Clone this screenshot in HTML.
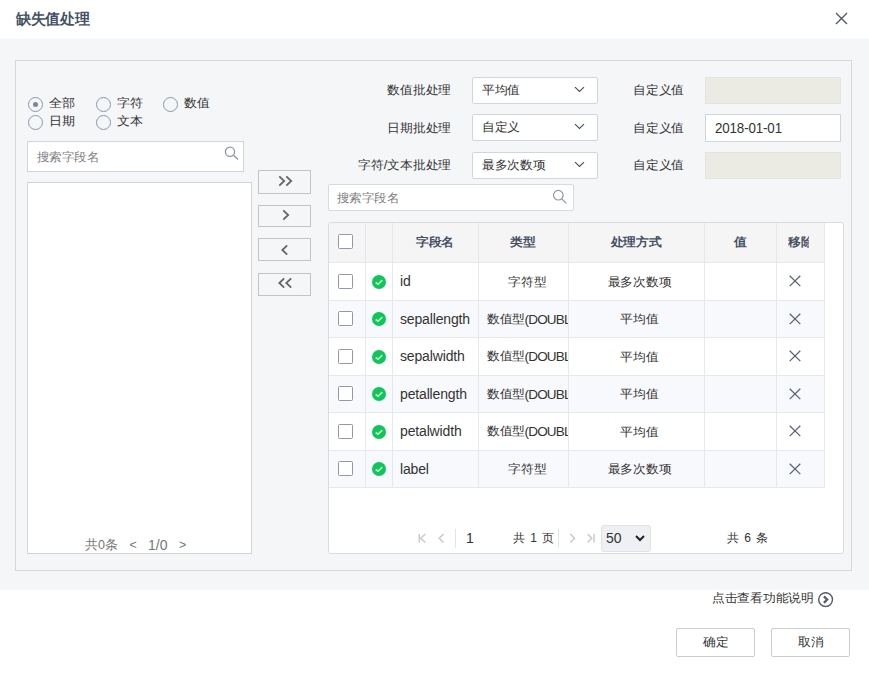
<!DOCTYPE html>
<html><head><meta charset="utf-8">
<style>
*{box-sizing:border-box;margin:0;padding:0}
html,body{width:869px;height:688px;overflow:hidden;background:#fff;font-family:"Liberation Sans",sans-serif;color:#333}
.a{position:absolute}
.title{left:16.3px;top:8px;font-size:15px;letter-spacing:-0.4px;font-weight:bold;color:#465164;line-height:22px}
.band{left:0;top:39px;width:869px;height:550px;background:#f5f6f8;box-shadow:0 -1px 0 #fafbfb,0 1px 0 #f8f9fa}
.panel{left:15px;top:60px;width:837px;height:511px;border:1px solid #d6d7d9}
.radio{width:15px;height:15px;border:1.5px solid #8e96a9;border-radius:50%}
.radio.on::after{content:"";position:absolute;left:3.5px;top:3.5px;width:5.6px;height:5.6px;border-radius:50%;background:#7d869b}
.t13{font-size:13px;line-height:16px;color:#333;white-space:nowrap;transform:scaleY(0.92);transform-origin:0 50%}
.inp{background:#fff;border:1px solid #cfd5df}
.ph{color:#808080;font-size:13px;line-height:16px;white-space:nowrap;transform:scale(0.96,0.92);transform-origin:0 50%}
.btn{width:53px;height:23px;border:1px solid #c4c4c4;background:#f5f6f8}
.lbl{font-size:13px;color:#333;text-align:right;line-height:16px;white-space:nowrap;transform:scale(0.98,0.92);transform-origin:100% 50%}
.sel{width:126px;height:27px;background:#fff;border:1px solid #cfd5df;border-radius:2px}
.dis{width:136px;height:27px;background:#ebebe4;border:1px solid #e2e4e2}
.tbl{left:328px;top:222px;width:516px;height:332px;background:#fff;border:1px solid #d8dbe0;border-radius:3px;overflow:hidden}
.cb{width:15px;height:15px;border:1.2px solid #9098aa;border-radius:1.5px;background:#fff}
.fbtn{width:79px;height:29px;border:1px solid #c8ccd6;background:#fff;border-radius:2px;font-size:13px;text-align:center;line-height:27px;color:#333}
.fbtn span{display:inline-block;transform:translateY(-0.5px) scale(0.98,0.92)}
.hl{height:1px;background:#e6e8ec}
.vl{width:1px;background:#e6e8ec}
.hd{font-size:13px;transform:scale(0.98,0.92);font-weight:bold;color:#465063;line-height:16px;white-space:nowrap}
.cell{font-size:13px;color:#333;line-height:16px;white-space:nowrap;transform:scale(0.98,0.92)}
.cj{display:inline-block;font-size:13px;transform:translateY(-1px) scale(0.98,0.92);transform-origin:0 50%}
.en{font-size:14px;color:#333;line-height:16px;white-space:nowrap;letter-spacing:-0.15px}
</style></head><body>
<div class="a title">缺失值处理</div>
<svg class="a" style="left:835px;top:12px" width="13" height="13" viewBox="0 0 13 13"><path d="M1 1L12 12M12 1L1 12" stroke="#525868" stroke-width="1.4"/></svg>
<div class="a band"></div>
<div class="a panel"></div>
<div class="a radio on" style="left:28px;top:97px"></div><div class="a t13" style="left:49px;top:95px">全部</div>
<div class="a radio" style="left:96px;top:97px"></div><div class="a t13" style="left:117px;top:95px">字符</div>
<div class="a radio" style="left:163px;top:97px"></div><div class="a t13" style="left:184px;top:95px">数值</div>
<div class="a radio" style="left:28px;top:115px"></div><div class="a t13" style="left:49px;top:113px">日期</div>
<div class="a radio" style="left:96px;top:115px"></div><div class="a t13" style="left:117px;top:113px">文本</div>
<div class="a inp" style="left:27px;top:141px;width:217px;height:31px"></div>
<div class="a ph" style="left:37px;top:149px">搜索字段名</div>
<svg class="a" style="left:222px;top:144px" width="18" height="18" viewBox="0 0 18 18"><circle cx="8" cy="7.7" r="4.6" fill="none" stroke="#8f97aa" stroke-width="1.3"/><path d="M11.4 11.2L16 15.6" stroke="#8f97aa" stroke-width="1.4"/></svg>
<div class="a" style="left:27px;top:182px;width:225px;height:372px;background:#fff;border:1px solid #d3d4d6"></div>
<div class="a" style="left:85px;top:537px;font-size:12.5px;color:#777;line-height:16px;white-space:nowrap">共0条</div>
<div class="a" style="left:129.5px;top:537px;font-size:12.5px;color:#777;line-height:16px;white-space:nowrap">&lt;</div>
<div class="a" style="left:148px;top:537px;font-size:12.5px;color:#777;line-height:16px;white-space:nowrap"><span style="font-size:14px">1/0</span></div>
<div class="a" style="left:179px;top:537px;font-size:12.5px;color:#777;line-height:16px;white-space:nowrap">&gt;</div>
<div class="a btn" style="left:258px;top:170px;height:24px"></div>
<svg class="a" style="left:277px;top:174.8px" width="17" height="12" viewBox="0 0 17 12"><path d="M2.3 1.3L7.2 6L2.3 10.7M9.3 1.3L14.2 6L9.3 10.7" fill="none" stroke="#666" stroke-width="1.8"/></svg>
<div class="a btn" style="left:258px;top:205px;height:22px"></div>
<svg class="a" style="left:277px;top:209.4px" width="17" height="12" viewBox="0 0 17 12"><path d="M6.3 1.3L11.2 6L6.3 10.7" fill="none" stroke="#666" stroke-width="1.8"/></svg>
<div class="a btn" style="left:258px;top:238px;height:23px"></div>
<svg class="a" style="left:277px;top:243.9px" width="17" height="12" viewBox="0 0 17 12"><path d="M10.2 1.3L5.3 6L10.2 10.7" fill="none" stroke="#666" stroke-width="1.8"/></svg>
<div class="a btn" style="left:258px;top:273px;height:23px"></div>
<svg class="a" style="left:277px;top:277px" width="17" height="12" viewBox="0 0 17 12"><path d="M7.2 1.3L2.3 6L7.2 10.7M14.2 1.3L9.3 6L14.2 10.7" fill="none" stroke="#666" stroke-width="1.8"/></svg>
<div class="a lbl" style="left:340px;width:111px;top:82px">数值批处理</div>
<div class="a lbl" style="left:620px;width:64px;top:82px">自定义值</div>
<div class="a lbl" style="left:340px;width:111px;top:120px">日期批处理</div>
<div class="a lbl" style="left:620px;width:64px;top:120px">自定义值</div>
<div class="a lbl" style="left:340px;width:111px;top:157px">字符/文本批处理</div>
<div class="a lbl" style="left:620px;width:64px;top:157px">自定义值</div>
<div class="a sel" style="left:472px;top:77px;height:27px"></div>
<div class="a cell" style="left:482px;top:82px;transform-origin:0 50%">平均值</div>
<svg class="a" style="left:574px;top:86px" width="11" height="7" viewBox="0 0 11 7"><path d="M1 1.2L5.5 5.5L10 1.2" fill="none" stroke="#465065" stroke-width="1.15"/></svg>
<div class="a sel" style="left:472px;top:114px;height:27px"></div>
<div class="a cell" style="left:482px;top:119px;transform-origin:0 50%">自定义</div>
<svg class="a" style="left:574px;top:123px" width="11" height="7" viewBox="0 0 11 7"><path d="M1 1.2L5.5 5.5L10 1.2" fill="none" stroke="#465065" stroke-width="1.15"/></svg>
<div class="a sel" style="left:472px;top:152px;height:27px"></div>
<div class="a cell" style="left:482px;top:157px;transform-origin:0 50%">最多次数项</div>
<svg class="a" style="left:574px;top:161px" width="11" height="7" viewBox="0 0 11 7"><path d="M1 1.2L5.5 5.5L10 1.2" fill="none" stroke="#465065" stroke-width="1.15"/></svg>
<div class="a dis" style="left:705px;top:77px"></div>
<div class="a inp" style="left:705px;top:114px;width:136px;height:28px"></div>
<div class="a en" style="left:715px;top:119.5px;font-size:15px;transform:scaleX(0.89);transform-origin:0 0">2018-01-01</div>
<div class="a dis" style="left:705px;top:152px"></div>
<div class="a inp" style="left:328px;top:184px;width:246px;height:27px;border-radius:2px;border-color:#d5dae3"></div>
<div class="a ph" style="left:337px;top:189.5px">搜索字段名</div>
<svg class="a" style="left:550px;top:187px" width="18" height="18" viewBox="0 0 18 18"><circle cx="8.3" cy="8.2" r="4.8" fill="none" stroke="#8d95a8" stroke-width="1.2"/><path d="M11.6 11.6L16.3 16.3" stroke="#8d95a8" stroke-width="1.2"/></svg>
<div class="a tbl"><div class="a" style="left:0;top:0;width:495px;height:39px;background:#f5f5f6"></div><div class="a" style="left:0;top:77px;width:495px;height:37px;background:#f8f9fc"></div><div class="a" style="left:0;top:152px;width:495px;height:37px;background:#f8f9fc"></div><div class="a" style="left:0;top:227px;width:495px;height:37px;background:#f8f9fc"></div><div class="a hl" style="left:0;top:39px;width:495px"></div><div class="a hl" style="left:0;top:77px;width:495px"></div><div class="a hl" style="left:0;top:114px;width:495px"></div><div class="a hl" style="left:0;top:152px;width:495px"></div><div class="a hl" style="left:0;top:189px;width:495px"></div><div class="a hl" style="left:0;top:227px;width:495px"></div><div class="a hl" style="left:0;top:264px;width:495px"></div><div class="a vl" style="left:36px;top:0;height:265px"></div><div class="a vl" style="left:63px;top:0;height:265px"></div><div class="a vl" style="left:149px;top:0;height:265px"></div><div class="a vl" style="left:239px;top:0;height:265px"></div><div class="a vl" style="left:375px;top:0;height:265px"></div><div class="a vl" style="left:447px;top:0;height:265px"></div><div class="a vl" style="left:495px;top:0;height:265px"></div><div class="a cb" style="left:9px;top:11px"></div><div class="a hd" style="left:46px;width:120px;text-align:center;top:10.5px">字段名</div><div class="a hd" style="left:134px;width:120px;text-align:center;top:10.5px">类型</div><div class="a hd" style="left:247px;width:120px;text-align:center;top:10.5px">处理方式</div><div class="a hd" style="left:351px;width:120px;text-align:center;top:10.5px">值</div><div class="a hd" style="left:459px;width:21px;overflow:hidden;top:10.5px">移除</div><div class="a cb" style="left:9px;top:51px"></div><svg class="a" style="left:43px;top:52px" width="14" height="14" viewBox="0 0 14 14"><circle cx="7" cy="7" r="7" fill="#10c65a"/><path d="M3.7 7.5L6 9.3L10.3 5.2" fill="none" stroke="#c2f2d3" stroke-width="1.6"/></svg><div class="a en" style="left:71px;top:50.0px">id</div><div class="a cell" style="left:153.5px;width:89px;text-align:center;top:50.80000000000001px">字符型</div><div class="a cell" style="left:242.5px;width:135px;text-align:center;top:50.80000000000001px">最多次数项</div><svg class="a" style="left:460px;top:52px" width="12" height="12" viewBox="0 0 12 12"><path d="M0.7 0.8L11.3 11.1M11.3 0.8L0.7 11.1" fill="none" stroke="#5a6276" stroke-width="1.3"/></svg><div class="a cb" style="left:9px;top:88px"></div><svg class="a" style="left:43px;top:89px" width="14" height="14" viewBox="0 0 14 14"><circle cx="7" cy="7" r="7" fill="#10c65a"/><path d="M3.7 7.5L6 9.3L10.3 5.2" fill="none" stroke="#c2f2d3" stroke-width="1.6"/></svg><div class="a en" style="left:71px;top:87.5px">sepallength</div><div class="a" style="left:158px;width:81px;overflow:hidden;top:87.5px;line-height:16px;white-space:nowrap;color:#333"><span class="cj">数值型</span><span style="font-size:13.5px;letter-spacing:-0.8px;margin-left:-1.5px">(DOUBLE)</span></div><div class="a cell" style="left:242.5px;width:135px;text-align:center;top:88.30000000000001px">平均值</div><svg class="a" style="left:460px;top:90px" width="12" height="12" viewBox="0 0 12 12"><path d="M0.7 0.8L11.3 11.1M11.3 0.8L0.7 11.1" fill="none" stroke="#5a6276" stroke-width="1.3"/></svg><div class="a cb" style="left:9px;top:126px"></div><svg class="a" style="left:43px;top:127px" width="14" height="14" viewBox="0 0 14 14"><circle cx="7" cy="7" r="7" fill="#10c65a"/><path d="M3.7 7.5L6 9.3L10.3 5.2" fill="none" stroke="#c2f2d3" stroke-width="1.6"/></svg><div class="a en" style="left:71px;top:125.0px">sepalwidth</div><div class="a" style="left:158px;width:81px;overflow:hidden;top:125.0px;line-height:16px;white-space:nowrap;color:#333"><span class="cj">数值型</span><span style="font-size:13.5px;letter-spacing:-0.8px;margin-left:-1.5px">(DOUBLE)</span></div><div class="a cell" style="left:242.5px;width:135px;text-align:center;top:125.80000000000001px">平均值</div><svg class="a" style="left:460px;top:127px" width="12" height="12" viewBox="0 0 12 12"><path d="M0.7 0.8L11.3 11.1M11.3 0.8L0.7 11.1" fill="none" stroke="#5a6276" stroke-width="1.3"/></svg><div class="a cb" style="left:9px;top:163px"></div><svg class="a" style="left:43px;top:164px" width="14" height="14" viewBox="0 0 14 14"><circle cx="7" cy="7" r="7" fill="#10c65a"/><path d="M3.7 7.5L6 9.3L10.3 5.2" fill="none" stroke="#c2f2d3" stroke-width="1.6"/></svg><div class="a en" style="left:71px;top:162.5px">petallength</div><div class="a" style="left:158px;width:81px;overflow:hidden;top:162.5px;line-height:16px;white-space:nowrap;color:#333"><span class="cj">数值型</span><span style="font-size:13.5px;letter-spacing:-0.8px;margin-left:-1.5px">(DOUBLE)</span></div><div class="a cell" style="left:242.5px;width:135px;text-align:center;top:163.3px">平均值</div><svg class="a" style="left:460px;top:165px" width="12" height="12" viewBox="0 0 12 12"><path d="M0.7 0.8L11.3 11.1M11.3 0.8L0.7 11.1" fill="none" stroke="#5a6276" stroke-width="1.3"/></svg><div class="a cb" style="left:9px;top:201px"></div><svg class="a" style="left:43px;top:202px" width="14" height="14" viewBox="0 0 14 14"><circle cx="7" cy="7" r="7" fill="#10c65a"/><path d="M3.7 7.5L6 9.3L10.3 5.2" fill="none" stroke="#c2f2d3" stroke-width="1.6"/></svg><div class="a en" style="left:71px;top:200.0px">petalwidth</div><div class="a" style="left:158px;width:81px;overflow:hidden;top:200.0px;line-height:16px;white-space:nowrap;color:#333"><span class="cj">数值型</span><span style="font-size:13.5px;letter-spacing:-0.8px;margin-left:-1.5px">(DOUBLE)</span></div><div class="a cell" style="left:242.5px;width:135px;text-align:center;top:200.8px">平均值</div><svg class="a" style="left:460px;top:202px" width="12" height="12" viewBox="0 0 12 12"><path d="M0.7 0.8L11.3 11.1M11.3 0.8L0.7 11.1" fill="none" stroke="#5a6276" stroke-width="1.3"/></svg><div class="a cb" style="left:9px;top:238px"></div><svg class="a" style="left:43px;top:239px" width="14" height="14" viewBox="0 0 14 14"><circle cx="7" cy="7" r="7" fill="#10c65a"/><path d="M3.7 7.5L6 9.3L10.3 5.2" fill="none" stroke="#c2f2d3" stroke-width="1.6"/></svg><div class="a en" style="left:71px;top:237.5px">label</div><div class="a cell" style="left:153.5px;width:89px;text-align:center;top:238.3px">字符型</div><div class="a cell" style="left:242.5px;width:135px;text-align:center;top:238.3px">最多次数项</div><svg class="a" style="left:460px;top:240px" width="12" height="12" viewBox="0 0 12 12"><path d="M0.7 0.8L11.3 11.1M11.3 0.8L0.7 11.1" fill="none" stroke="#5a6276" stroke-width="1.3"/></svg><svg class="a" style="left:88px;top:309px" width="40" height="12" viewBox="0 0 40 12"><path d="M2.3 2V10.5M8.4 2L3.6 6.2L8.4 10.5M26.5 2L22.2 6.2L26.5 10.5" fill="none" stroke="#c6c8cc" stroke-width="1.4"/></svg><div class="a vl" style="left:126px;top:306px;height:19px;background:#e3e4e8"></div><div class="a en" style="left:137px;top:307px">1</div><div class="a" style="left:184px;top:307px;font-size:12px;letter-spacing:1px;line-height:16px;white-space:nowrap;color:#333">共 1 页</div><div class="a vl" style="left:229px;top:306px;height:19px;background:#e3e4e8"></div><svg class="a" style="left:239px;top:309px" width="30" height="12" viewBox="0 0 30 12"><path d="M2.3 2L6.6 6.2L2.3 10.5M19.5 2L23.8 6.2L19.5 10.5M26 2V10.5" fill="none" stroke="#c6c8cc" stroke-width="1.4"/></svg><div class="a" style="left:272px;top:302px;width:50px;height:27px;background:#eef0f3;border:1px solid #dfe2e8;border-radius:3px"></div><div class="a en" style="left:277px;top:307px">50</div><svg class="a" style="left:306px;top:312px" width="10" height="7" viewBox="0 0 10 7"><path d="M1 1L5 5L9 1" fill="none" stroke="#222" stroke-width="2"/></svg><div class="a" style="left:398px;top:307px;font-size:12px;letter-spacing:1px;line-height:16px;white-space:nowrap;color:#333">共 6 条</div></div>
<div class="a" style="left:712px;top:590px;font-size:13px;color:#333;line-height:16px;white-space:nowrap;transform:scale(0.98,0.92);transform-origin:0 50%">点击查看功能说明</div>
<svg class="a" style="left:817.5px;top:591.5px" width="16" height="16" viewBox="0 0 16 16"><circle cx="7.6" cy="7.6" r="6.9" fill="none" stroke="#585e6e" stroke-width="1.45"/><path d="M5.9 4.4L9.2 7.6L5.9 10.8" fill="none" stroke="#585e6e" stroke-width="2.3"/></svg>
<div class="a fbtn" style="left:676px;top:628px"><span>确定</span></div>
<div class="a fbtn" style="left:771px;top:628px"><span>取消</span></div>
</body></html>
